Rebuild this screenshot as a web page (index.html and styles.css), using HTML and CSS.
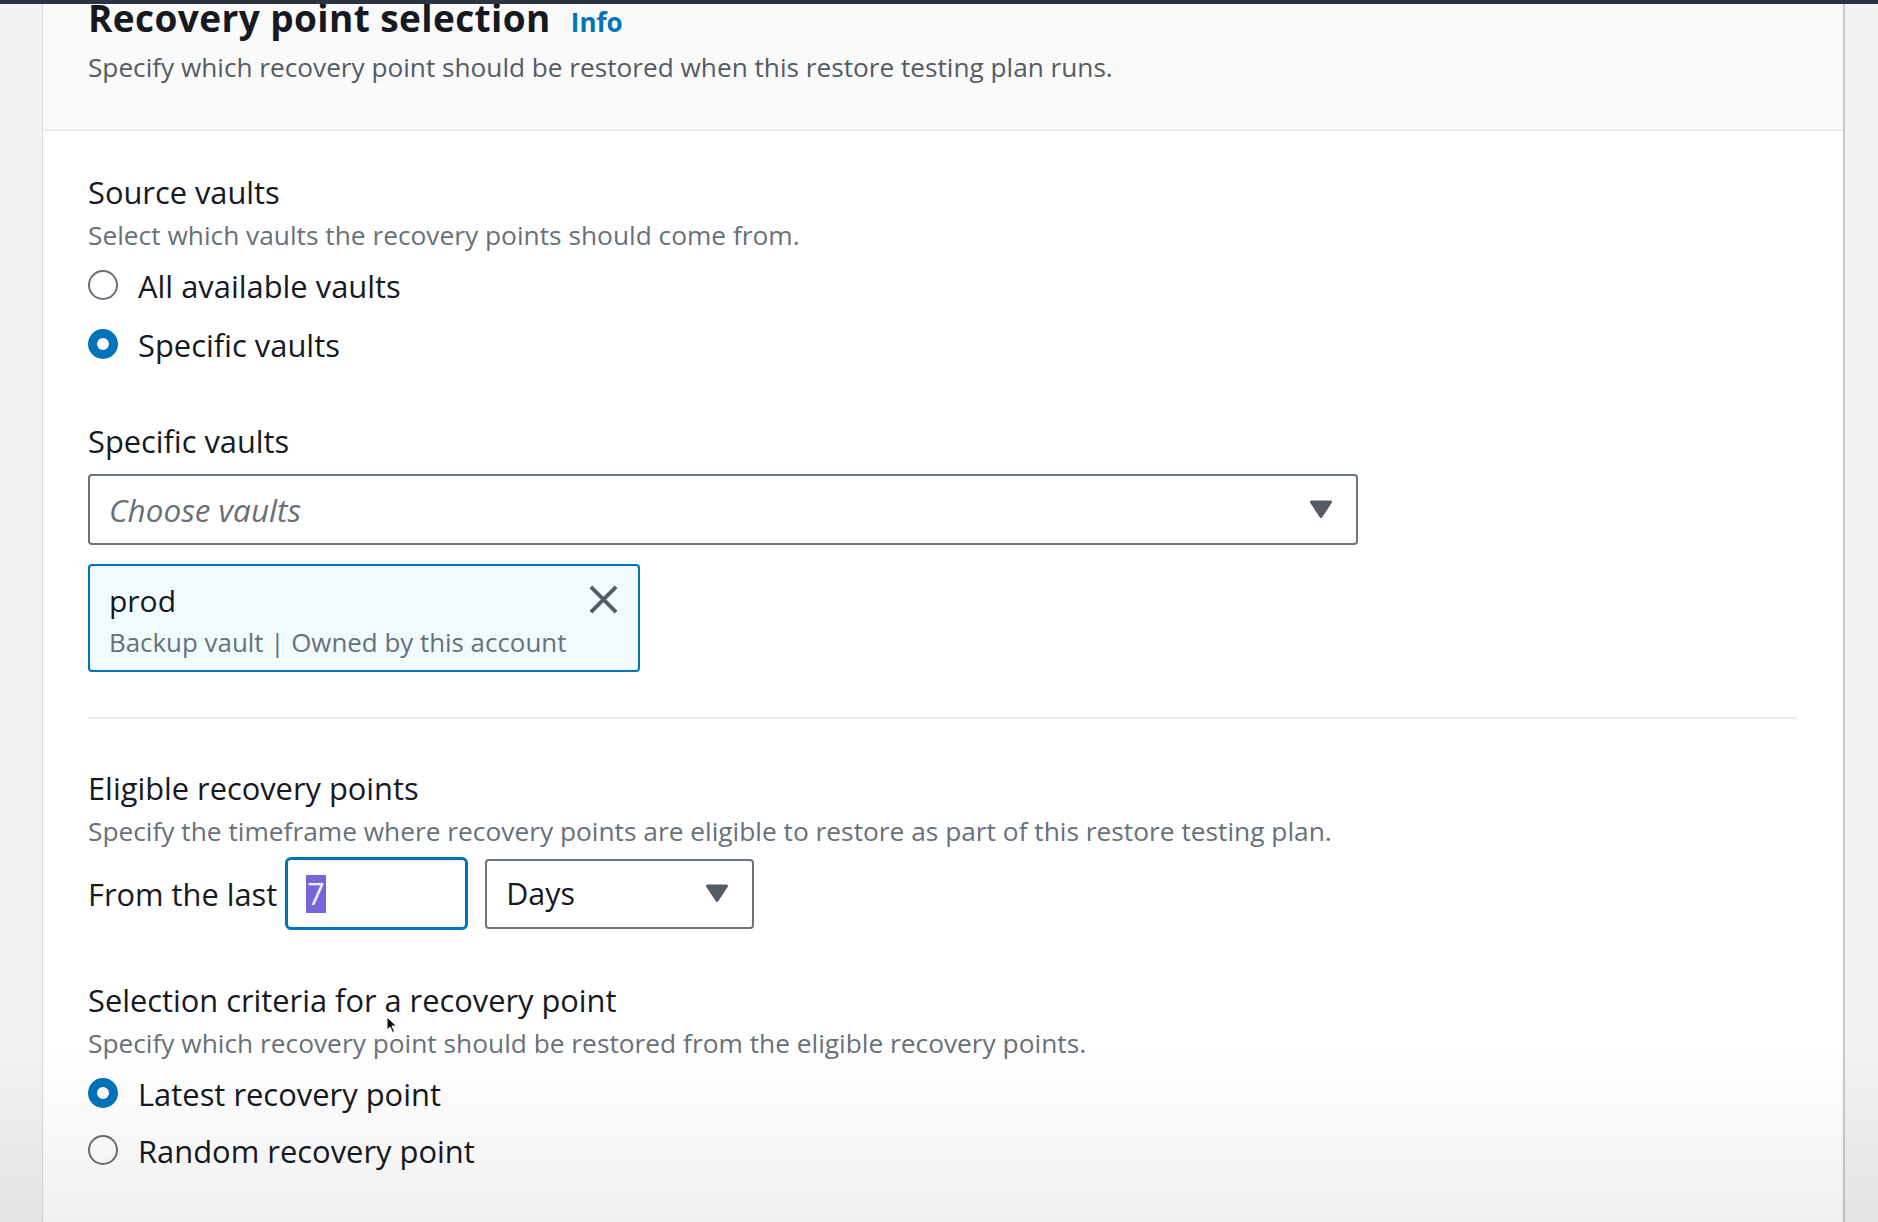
FILE: index.html
```html
<!DOCTYPE html>
<html lang="en">
<head>
<meta charset="utf-8">
<title>Recovery point selection</title>
<link rel="stylesheet" href="styles.css">
</head>
<body>
<div class="topbar"></div>
<section class="panel">
  <header class="panel-header">
    <div class="title-row">
      <h2 class="title">Recovery point selection</h2>
      <a class="info" href="#">Info</a>
    </div>
    <p class="header-desc">Specify which recovery point should be restored when this restore testing plan runs.</p>
  </header>
  <div class="panel-body">
    <div class="field">
      <div class="label">Source vaults</div>
      <div class="desc">Select which vaults the recovery points should come from.</div>
      <div class="radio-group radio-group-wide">
        <div class="radio"><span class="dot"></span><span class="radio-label">All available vaults</span></div>
        <div class="radio"><span class="dot dot-checked"></span><span class="radio-label">Specific vaults</span></div>
      </div>
    </div>

    <div class="field field-vaults">
      <div class="label">Specific vaults</div>
      <div class="select select-vaults">
        <span class="placeholder">Choose vaults</span>
        <svg class="caret" viewBox="0 0 24 19" width="24" height="19"><path d="M2.5 2 H21.5 L12 16.5 Z" fill="#545b64" stroke="#545b64" stroke-width="3" stroke-linejoin="round"/></svg>
      </div>
      <div class="token">
        <div class="token-text">
          <div class="token-name">prod</div>
          <div class="token-desc">Backup vault | Owned by this account</div>
        </div>
        <svg class="token-x" viewBox="0 0 32 32" width="31" height="31"><path d="M3 3 L29 29 M29 3 L3 29" stroke="#545b64" stroke-width="4" fill="none"/></svg>
      </div>
    </div>

    <div class="divider"></div>

    <div class="field field-eligible">
      <div class="label">Eligible recovery points</div>
      <div class="desc">Specify the timeframe where recovery points are eligible to restore as part of this restore testing plan.</div>
      <div class="range-row">
        <span class="range-label">From the last</span>
        <div class="num-input"><span class="selected">7</span></div>
        <div class="select select-days">
          <span class="value">Days</span>
          <svg class="caret" viewBox="0 0 24 19" width="24" height="19"><path d="M2.5 2 H21.5 L12 16.5 Z" fill="#545b64" stroke="#545b64" stroke-width="3" stroke-linejoin="round"/></svg>
        </div>
      </div>
    </div>

    <div class="field field-criteria">
      <div class="label">Selection criteria for a recovery point</div>
      <div class="desc">Specify which recovery point should be restored from the eligible recovery points.</div>
      <div class="radio-group">
        <div class="radio"><span class="dot dot-checked"></span><span class="radio-label">Latest recovery point</span></div>
        <div class="radio"><span class="dot"></span><span class="radio-label">Random recovery point</span></div>
      </div>
    </div>
  </div>
</section>
<svg class="cursor" viewBox="0 0 12 18" width="12" height="18"><path d="M1 1 L1 14 L4 11 L6.5 16.5 L8.5 15.5 L6 10 L10.5 10 Z" fill="#111" stroke="#fff" stroke-width="1"/></svg>
<div class="fade"></div>
</body>
</html>
```

FILE: styles.css
```css
html, body {
  height: 100%;
}

body {
  margin: 0;
  overflow: hidden;
  background: #f2f2f2;
  font-family: "Open Sans", "Noto Sans", sans-serif;
  color: #16191f;
  position: relative;
}

.topbar {
  height: 4px;
  background: #2b3440;
  position: relative;
  z-index: 2;
}

.panel {
  margin: 0 33px 0 42px;
  min-height: calc(100% - 4px);
  background: #ffffff;
  border-left: 1px solid #d9dcdd;
  border-right: 2px solid #c6c8c9;
  box-sizing: border-box;
}

.panel-header {
  background: #fafafa;
  padding: 0 46px 45px 45px;
  border-bottom: 2px solid #eaeded;
}

.title-row {
  display: flex;
  align-items: baseline;
  height: 28px;
}

.title {
  margin: 0;
  font-size: 37px;
  line-height: 28px;
  font-weight: 700;
  letter-spacing: 0.4px;
  color: #16191f;
}

.info {
  margin-left: 20px;
  font-size: 26px;
  line-height: 20px;
  font-weight: 700;
  color: #0073bb;
  text-decoration: none;
}

.header-desc {
  margin: 18px 0 0;
  font-size: 26.2px;
  line-height: 34px;
  color: #545b64;
}

.panel-body {
  padding: 43px 46px 0 45px;
}

.label {
  font-size: 30.8px;
  line-height: 36px;
  color: #16191f;
}

.desc {
  margin-top: 8px;
  font-size: 26.3px;
  line-height: 34px;
  color: #687078;
}

.radio-group {
  margin-top: 14px;
  display: flex;
  flex-direction: column;
  gap: 17px;
}

.radio-group-wide {
  gap: 19px;
}

.radio {
  display: flex;
  align-items: center;
  height: 40px;
}

.dot {
  width: 30px;
  height: 30px;
  box-sizing: border-box;
  border: 2px solid #687078;
  border-radius: 50%;
  margin-right: 20px;
  margin-top: -2px;
  background: #fff;
  flex: none;
}

.dot-checked {
  border: 9px solid #0073bb;
}

.radio-label {
  font-size: 30.9px;
  line-height: 40px;
  color: #16191f;
}

.field-vaults {
  margin-top: 58px;
}

.select {
  display: flex;
  align-items: center;
  justify-content: space-between;
  box-sizing: border-box;
  border: 2px solid #6c747c;
  border-radius: 4px;
  background: #fff;
  padding: 0 23px 0 19px;
}

.select-vaults {
  margin-top: 15px;
  width: 1270px;
  height: 71px;
}

.placeholder {
  font-size: 31.5px;
  line-height: 36px;
  font-style: italic;
  color: #687078;
}

.caret {
  display: block;
  flex: none;
}

.token {
  margin-top: 19px;
  width: 552px;
  box-sizing: border-box;
  display: flex;
  justify-content: space-between;
  align-items: flex-start;
  border: 2px solid #0073bb;
  border-radius: 4px;
  background: #f1faff;
  padding: 17px 19px 11px 19px;
}

.token-name {
  font-size: 30px;
  line-height: 36px;
  color: #16191f;
}

.token-desc {
  margin-top: 6px;
  font-size: 25.9px;
  line-height: 34px;
  color: #687078;
}

.token-x {
  display: block;
  margin-top: 1px;
  width: 31px;
  height: 31px;
}

.divider {
  margin-top: 45px;
  height: 2px;
  background: #eaeded;
}

.field-eligible {
  margin-top: 51px;
}

.range-row {
  margin-top: 9px;
  display: flex;
  align-items: center;
  height: 73px;
}

.range-label {
  font-size: 30.8px;
  line-height: 40px;
  color: #16191f;
  margin-right: 8px;
}

.num-input {
  width: 183px;
  height: 73px;
  box-sizing: border-box;
  border: 3px solid #0073bb;
  border-radius: 6px;
  background: #fff;
  display: flex;
  align-items: center;
  padding-left: 18px;
}

.selected {
  display: block;
  background: #7866d8;
  color: #f2efff;
  font-size: 30.4px;
  line-height: 38px;
  padding: 0 1px;
}

.select-days {
  margin-left: 17px;
  width: 269px;
  height: 70px;
}

.value {
  font-size: 30.4px;
  line-height: 40px;
  color: #16191f;
}

.field-criteria {
  margin-top: 52px;
}

.cursor {
  position: absolute;
  left: 386px;
  top: 1016px;
}

.fade {
  position: fixed;
  left: 0;
  right: 0;
  bottom: 0;
  height: 175px;
  background: linear-gradient(to bottom, rgba(0, 0, 0, 0), rgba(0, 0, 0, 0.06));
  pointer-events: none;
}
```
